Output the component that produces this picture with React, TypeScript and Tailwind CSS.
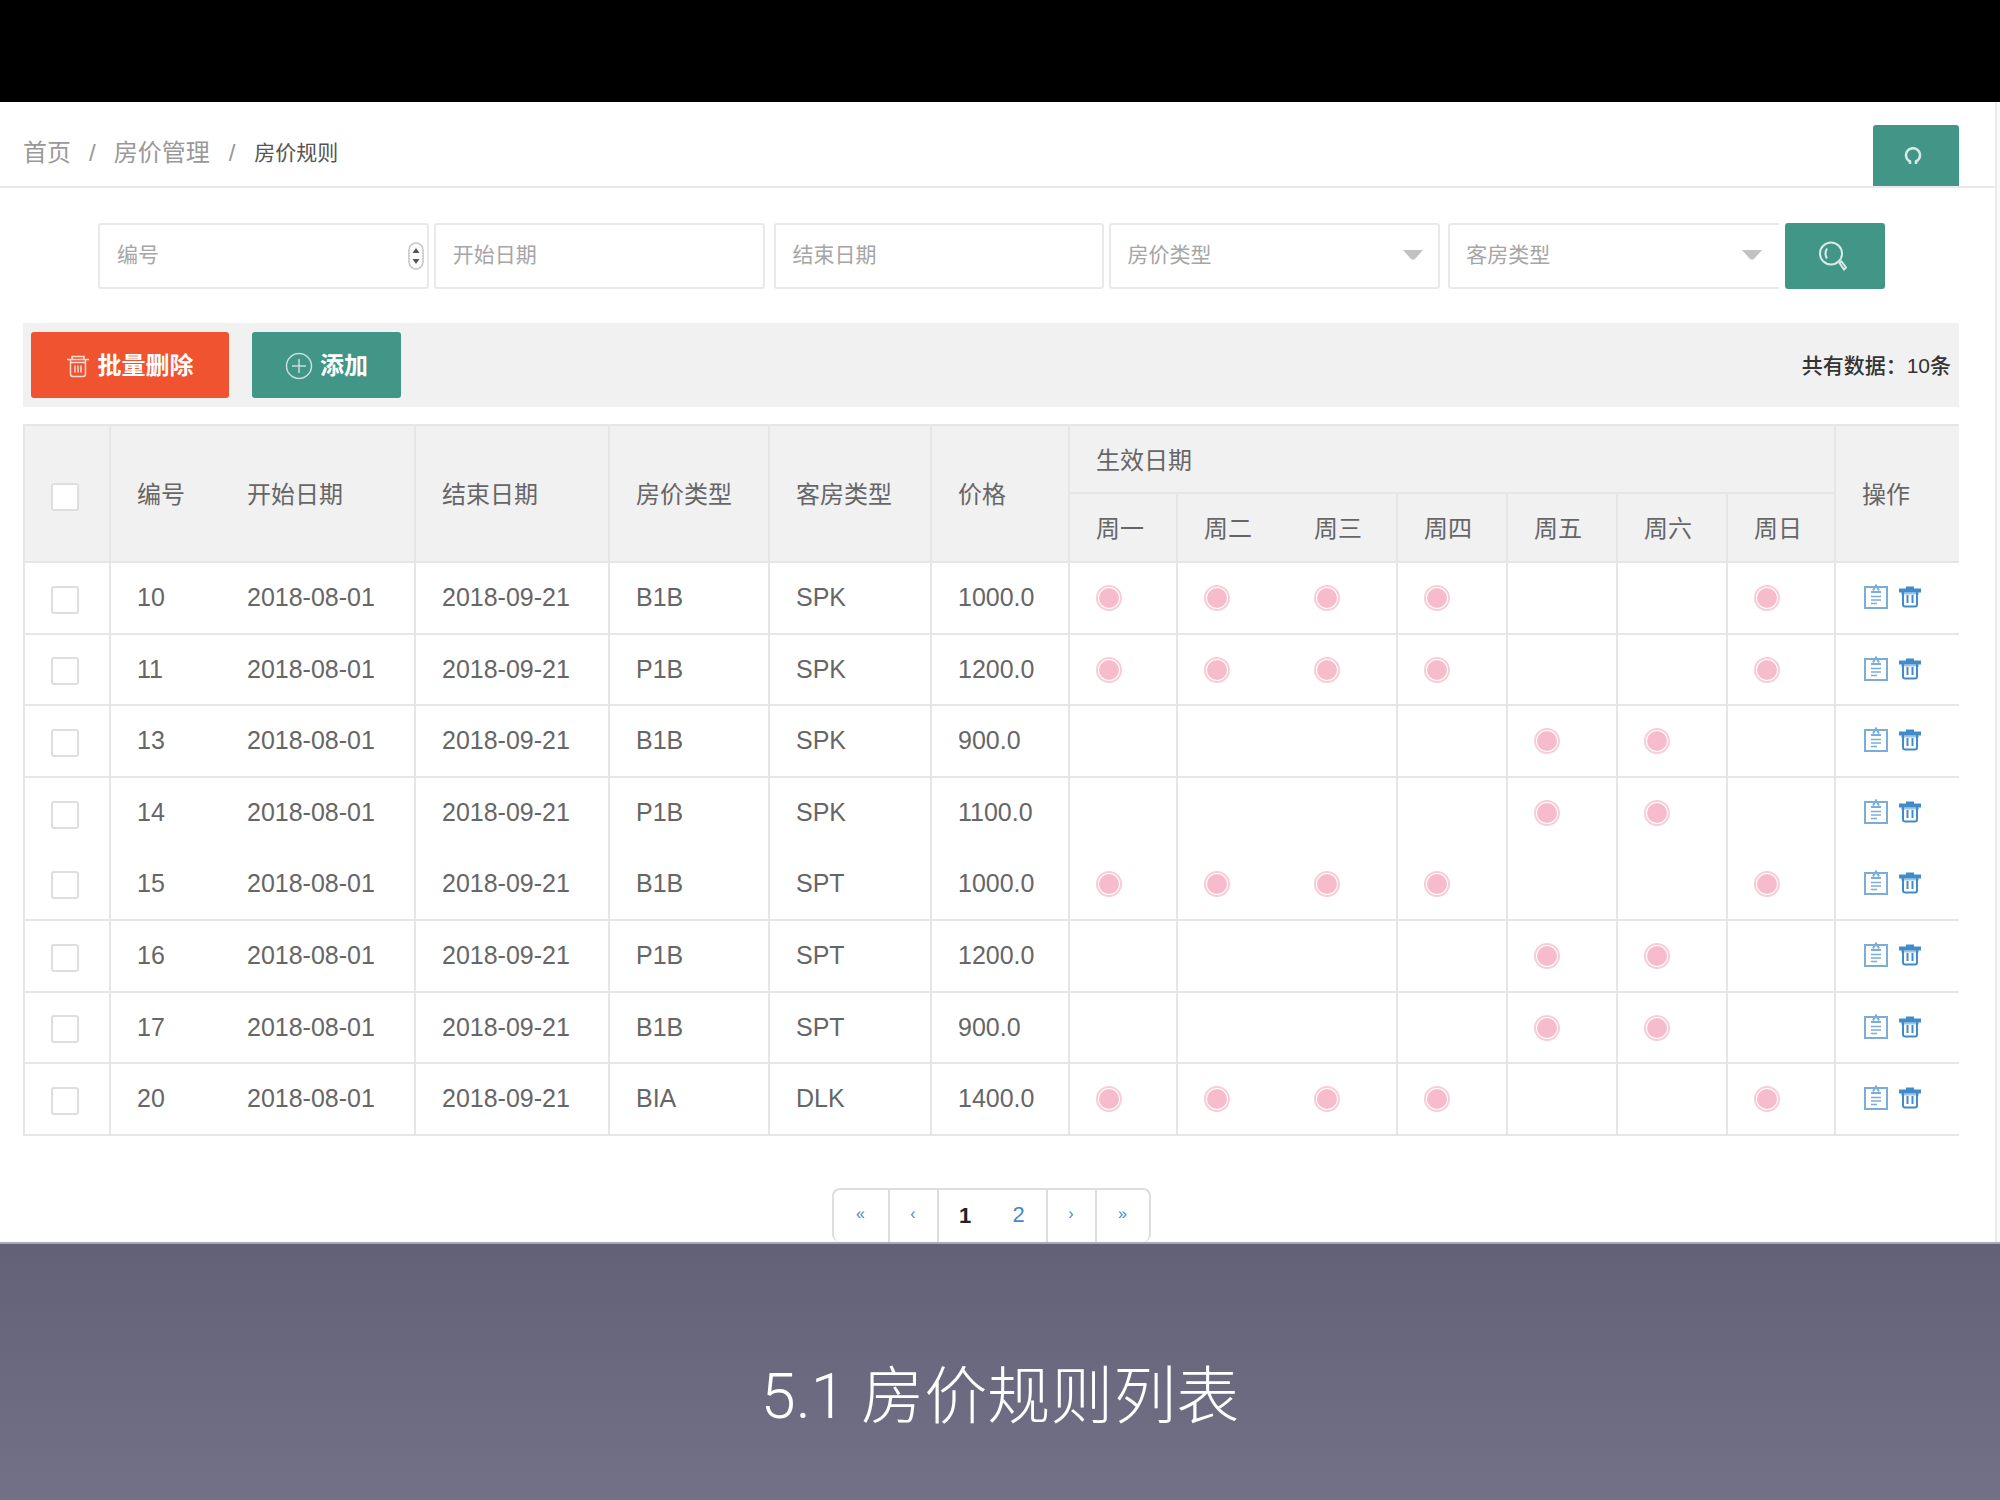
import { useState } from 'react';

interface PriceRule {
  id: number;
  type: string;
  room: string;
  price: string;
  days: number[];
}

const WEEKDAYS = [1, 2, 3, 4, 5, 6, 7];
const SUN_TO_THU = [1, 2, 3, 4, 7];
const WEEKEND = [5, 6];

const rules: PriceRule[] = [
  { id: 10, type: 'B1B', room: 'SPK', price: '1000.0', days: SUN_TO_THU },
  { id: 11, type: 'P1B', room: 'SPK', price: '1200.0', days: SUN_TO_THU },
  { id: 13, type: 'B1B', room: 'SPK', price: '900.0', days: WEEKEND },
  { id: 14, type: 'P1B', room: 'SPK', price: '1100.0', days: WEEKEND },
  { id: 15, type: 'B1B', room: 'SPT', price: '1000.0', days: SUN_TO_THU },
  { id: 16, type: 'P1B', room: 'SPT', price: '1200.0', days: WEEKEND },
  { id: 17, type: 'B1B', room: 'SPT', price: '900.0', days: WEEKEND },
  { id: 20, type: 'BIA', room: 'DLK', price: '1400.0', days: SUN_TO_THU },
];

const TrashIcon = ({ className }: { className: string }) => (
  <svg viewBox="0 0 22 22" fill="none" stroke="currentColor" className={className}>
    <path d="M0 4.500h22" strokeWidth="4" />
    <path d="M7 2h8" strokeWidth="3" />
    <path d="M2 7.500h18" strokeWidth="2" opacity="0.5" />
    <path d="M4 6v12.500q0 2 2 2h10q2 0 2-2V6" strokeWidth="2" />
    <path d="M8.500 9v8M13.500 9v8" strokeWidth="2" />
  </svg>
);

// thin version used on the coloured button
const TrashLineIcon = () => (
  <svg viewBox="0 0 22 24" fill="none" stroke="currentColor" strokeWidth="1.500" className="h-6 w-[22px] opacity-80">
    <path d="M0 5.500h22M5 5V2.500h12V5" />
    <path d="M3.500 6v14q0 2.500 2.500 2.500h10q2.500 0 2.500-2.500V6M3.500 8.500h15" />
    <path d="M8 11.500v7M11 11.500v7M14 11.500v7" />
  </svg>
);

const EditIcon = () => (
  <svg viewBox="0 0 24 26" fill="none" stroke="currentColor" className="h-[26px] w-6">
    <rect x="1" y="3" width="22" height="21" strokeWidth="2" />
    <path d="M7 8h10M9 6.500l3-5 3 5" strokeWidth="2" />
    <path d="M7 12.500h10M7 16h10M7 19.500h6" strokeWidth="1.500" />
  </svg>
);

const DayDot = () => (
  <svg viewBox="0 0 26 26" className="h-[26px] w-[26px]">
    <circle cx="13" cy="13" r="12" fill="none" stroke="#f8cdd7" strokeWidth="2" />
    <circle cx="13" cy="13" r="10" fill="#f6bccb" />
  </svg>
);

const CheckBox = ({ label }: { label: string }) => (
  <input
    type="checkbox"
    aria-label={label}
    className="mt-[3px] block h-7 w-7 appearance-none rounded-[3px] border-2 border-[#dedede] bg-white checked:bg-[#429687]"
  />
);

const SelectBox = ({ label, className }: { label: string; className: string }) => (
  <div className="relative min-w-0 flex-1">
    <select
      aria-label={label}
      className={`h-[66px] w-full appearance-none rounded-[3px] border-2 border-[#e9e9e9] bg-white px-4 pb-[2px] text-[21px] text-[#a6a6a6] ${className}`}
    >
      <option>{label}</option>
    </select>
    <svg viewBox="0 0 20 10" className="pointer-events-none absolute top-[27px] right-[17px] h-[10px] w-5">
      <path d="M0 0h20l-8 9q-2 1.500-4 0z" fill="#c2c2c2" />
    </svg>
  </div>
);

const th = 'border-t-2 border-[#e6e6e6] pt-[3px] pr-2 text-left text-[24px] font-normal';
const td = 'border-[#e6e6e6] pr-2';
// neighbouring columns share a cell edge unless the pair is drawn as one
const edge = 'border-l-2 pl-[26px]';
const noEdge = 'pl-[28px]';
const input = 'h-[66px] w-full rounded-[3px] border-2 border-[#e9e9e9] bg-white px-[17px] pb-[2px] text-[21px] placeholder:text-[#a6a6a6]';

export default function App() {
  const [page, setPage] = useState(1);

  return (
    <div className="flex min-h-screen flex-col bg-[#65647a] font-['Liberation_Sans','Noto_Sans_CJK_SC',sans-serif] text-[25px] text-[#666]">
      <div className="h-[102px] bg-black" />

      <main className="border-b-2 border-[#a9a9b3] bg-[#fafafa] pr-[3px]">
        <div className="border-r-2 border-[#e9e9e9] bg-white">
          <header className="flex h-[86px] items-end justify-between border-b-2 border-[#e9e9e9] pr-9 pl-[23px]">
            <nav className="flex h-[67px] items-center text-[24px] text-[#999]">
              <a href="#home">首页</a>
              <span className="px-[18px]">/</span>
              <a href="#price">房价管理</a>
              <span className="px-[19px]">/</span>
              <a href="#rules" className="text-[21px] text-[#555]">房价规则</a>
            </nav>
            <button aria-label="刷新" className="flex h-[61px] w-[86px] items-center justify-center rounded-t-[3px] bg-[#429687] pr-[6px] text-white">
              <svg viewBox="0 0 18 18" fill="none" stroke="currentColor" strokeWidth="2.500" className="h-[18px] w-[18px] opacity-80">
                <path d="M6 17v-2.500A7 7 0 1 1 12 14.500v2.500" />
              </svg>
            </button>
          </header>

          <form className="mt-[35px] flex pr-[110px] pl-[98px]" onSubmit={(e) => e.preventDefault()}>
            <div className="relative mr-[5px] min-w-0 flex-1">
              <input aria-label="编号" placeholder="编号" className={input} />
              <svg viewBox="0 0 16 28" className="pointer-events-none absolute top-[19px] right-[5px] h-7 w-4">
                <rect x="1" y="1" width="14" height="26" rx="7" fill="#fff" stroke="#c4c4c4" strokeWidth="1.500" />
                <path d="M4.500 11L8 6l3.500 5zM4.500 17l3.500 5 3.500-5z" fill="#555" />
              </svg>
            </div>
            <div className="mr-[9px] min-w-0 flex-1">
              <input aria-label="开始日期" placeholder="开始日期" className={input} />
            </div>
            <div className="mr-[5px] min-w-0 flex-1">
              <input aria-label="结束日期" placeholder="结束日期" className={input} />
            </div>
            <SelectBox label="房价类型" className="" />
            <div className="w-2" />
            <SelectBox label="客房类型" className="rounded-r-none border-r-0" />
            <button aria-label="搜索" className="ml-[6px] flex h-[66px] w-[100px] items-center justify-center rounded-[3px] bg-[#429687] pr-1 text-white">
              <svg viewBox="0 0 28 30" fill="none" stroke="currentColor" strokeWidth="2" className="h-[30px] w-7 opacity-80">
                <circle cx="12" cy="12.500" r="11" />
                <path d="M8 7.500q-3 5 0 10" />
                <path d="M20.500 22l2-1.500 4.500 6-2 2z" />
              </svg>
            </button>
          </form>

          <section className="mt-[34px] mr-9 ml-[23px] flex h-[84px] items-center bg-[#f1f1f1] pr-2 pl-2">
            <button className="flex h-[66px] w-[198px] items-center justify-center gap-[9px] rounded-[3px] bg-[#ef5330] pt-[2px] text-[24px] font-bold text-white">
              <TrashLineIcon />
              批量删除
            </button>
            <button className="ml-[23px] flex h-[66px] w-[149px] items-center justify-center gap-[7px] rounded-[3px] bg-[#429687] pt-[2px] text-[24px] font-bold text-white">
              <svg viewBox="0 0 28 28" fill="none" stroke="currentColor" strokeWidth="1.500" className="h-7 w-7 opacity-70">
                <circle cx="14" cy="14" r="12.500" />
                <path d="M14 7v14M7 14h14" />
              </svg>
              添加
            </button>
            <span className="ml-auto pt-[2px] text-[21px] font-medium text-[#333]">共有数据：10条</span>
          </section>

          <div className="mt-[17px] mr-9 ml-[23px]">
            <table className="w-full table-fixed border-separate border-spacing-0 border-b-2 border-[#e6e6e6]">
              <colgroup>
                <col className="w-[86px]" />
                <col className="w-[110px]" />
                <col className="w-[195px]" />
                <col className="w-[194px]" />
                <col className="w-[160px]" />
                <col className="w-[162px]" />
                <col className="w-[138px]" />
                <col className="w-[108px]" />
                <col className="w-[110px]" />
                <col className="w-[110px]" />
                <col className="w-[110px]" />
                <col className="w-[110px]" />
                <col className="w-[110px]" />
                <col className="w-[108px]" />
                <col />
              </colgroup>
              <thead className="bg-[#f1f1f1]">
                <tr className="h-[68px]">
                  <th rowSpan={2} className={`${th} ${edge}`}><CheckBox label="全选" /></th>
                  <th rowSpan={2} className={`${th} ${edge}`}>编号</th>
                  <th rowSpan={2} className={`${th} ${noEdge}`}>开始日期</th>
                  <th rowSpan={2} className={`${th} ${edge}`}>结束日期</th>
                  <th rowSpan={2} className={`${th} ${edge}`}>房价类型</th>
                  <th rowSpan={2} className={`${th} ${edge}`}>客房类型</th>
                  <th rowSpan={2} className={`${th} ${edge}`}>价格</th>
                  <th colSpan={7} className={`${th} ${edge}`}>生效日期</th>
                  <th rowSpan={2} className={`${th} ${edge}`}>操作</th>
                </tr>
                <tr className="h-[69px]">
                  {['周一', '周二', '周三', '周四', '周五', '周六', '周日'].map((day) => (
                    <th key={day} className={`${th} ${day === '周三' ? noEdge : edge}`}>{day}</th>
                  ))}
                </tr>
              </thead>
              <tbody>
                {rules.map((rule) => {
                  const line = rule.id === 15 ? '' : 'border-t-2';
                  const cell = `${td} ${line} ${edge}`;
                  const openCell = `${td} ${line} ${noEdge}`;
                  return (
                    <tr key={rule.id} className={rule.id % 2 && rule.id !== 13 ? 'h-[71px]' : 'h-[72px]'}>
                      <td className={cell}><CheckBox label={`选择 ${rule.id}`} /></td>
                      <td className={cell}>{rule.id}</td>
                      <td className={openCell}>2018-08-01</td>
                      <td className={cell}>2018-09-21</td>
                      <td className={cell}>{rule.type}</td>
                      <td className={cell}>{rule.room}</td>
                      <td className={cell}>{rule.price}</td>
                      {WEEKDAYS.map((day) => (
                        <td key={day} className={day === 3 ? openCell : cell}>
                          {rule.days.includes(day) && <DayDot />}
                        </td>
                      ))}
                      <td className={cell}>
                        <div className="flex items-center gap-[11px] pb-[2px] pl-[2px] text-[#428bca]">
                          <button aria-label="编辑" className="opacity-70"><EditIcon /></button>
                          <button aria-label="删除"><TrashIcon className="h-[22px] w-[22px]" /></button>
                        </div>
                      </td>
                    </tr>
                  );
                })}
              </tbody>
            </table>
          </div>

          <nav aria-label="分页" className="mt-[52px] flex justify-center pr-[13px] text-[22px] text-[#428bca]">
            <div className="flex h-[54px] rounded-[8px] border-2 border-b-0 border-[#ddd]">
              <button aria-label="首页" className="w-[54px] pb-1 text-base">«</button>
              <button aria-label="上一页" className="w-[49px] border-l-2 border-[#ddd] pb-1 text-base">‹</button>
              <button className="w-[55px] border-l-2 border-[#ddd] pb-[2px] font-bold text-[#222]" onClick={() => setPage(1)} aria-current={page === 1}>1</button>
              <button className="w-[54px] pb-1" onClick={() => setPage(2)} aria-current={page === 2}>2</button>
              <button aria-label="下一页" className="w-[49px] border-l-2 border-[#ddd] pb-1 text-base">›</button>
              <button aria-label="末页" className="w-[54px] border-l-2 border-[#ddd] pb-1 text-base">»</button>
            </div>
          </nav>
        </div>
      </main>

      <footer className="flex flex-1 items-center justify-center bg-linear-to-b from-[#626177] to-[#727187] pt-[50px]">
        <h1 className="font-['Roboto','Noto_Sans_CJK_SC',sans-serif] text-[63px] font-light text-white">5.1 房价规则列表</h1>
      </footer>
    </div>
  );
}
